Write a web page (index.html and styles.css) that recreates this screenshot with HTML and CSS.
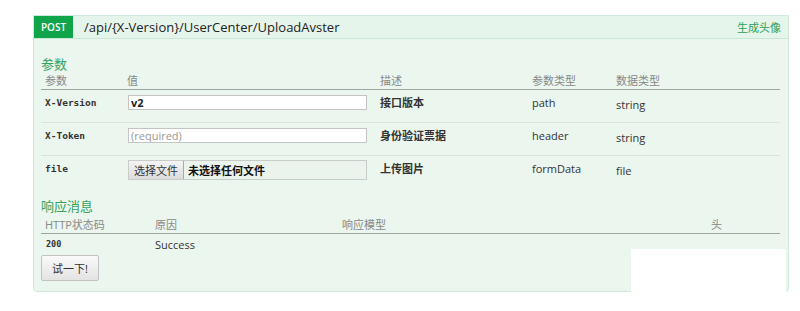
FILE: index.html
```html
<!DOCTYPE html>
<html lang="zh">
<head>
<meta charset="utf-8">
<link rel="stylesheet" href="styles.css">
</head>
<body>
<div class="card">
  <div class="head">
    <span class="method">POST</span>
    <span class="path">/api/{X-Version}/UserCenter/UploadAvster</span>
    <span class="summary">生成头像</span>
  </div>
  <div class="body">
    <h4 class="title">参数</h4>
    <table class="params">
      <colgroup><col class="c1"><col class="c2"><col class="c3"><col class="c4"><col></colgroup>
      <thead>
        <tr><th>参数</th><th>值</th><th>描述</th><th>参数类型</th><th>数据类型</th></tr>
      </thead>
      <tbody>
        <tr>
          <td class="code">X-Version</td>
          <td><input class="txt" type="text" value="v2"></td>
          <td class="desc">接口版本</td>
          <td>path</td>
          <td class="dt">string</td>
        </tr>
        <tr>
          <td class="code">X-Token</td>
          <td><input class="txt" type="text" placeholder="(required)"></td>
          <td class="desc">身份验证票据</td>
          <td>header</td>
          <td class="dt">string</td>
        </tr>
        <tr class="last">
          <td class="code">file</td>
          <td><div class="file"><span class="fbtn">选择文件</span><span class="fname">未选择任何文件</span></div></td>
          <td class="desc">上传图片</td>
          <td>formData</td>
          <td class="dt">file</td>
        </tr>
      </tbody>
    </table>
    <h4 class="title resp">响应消息</h4>
    <table class="codes">
      <colgroup><col class="r1"><col class="r2"><col class="r3"><col></colgroup>
      <thead>
        <tr><th>HTTP状态码</th><th>原因</th><th>响应模型</th><th>头</th></tr>
      </thead>
      <tbody>
        <tr><td class="code">200</td><td>Success</td><td></td><td></td></tr>
      </tbody>
    </table>
    <button class="try">试一下!</button>
  </div>
</div>
<div class="cover"></div>
</body>
</html>
```
FILE: styles.css
```css
* { box-sizing: border-box; }
body {
  margin: 0;
  background: #fff;
  font-family: "Open Sans", "Noto Sans CJK SC", sans-serif;
  color: #333;
  width: 800px;
  height: 311px;
  overflow: hidden;
  position: relative;
}
.card {
  margin: 15px 0 0 33px;
  width: 756px;
  height: 277px;
  border: 1px solid #cfe9da;
  border-radius: 0 0 4px 4px;
  background: #ebf6ef;
}
.head {
  display: flex;
  align-items: center;
  height: 23px;
  background: #e6f5ec;
  border-bottom: 1px solid #c9e7d5;
}
.method {
  display: flex;
  align-items: center;
  justify-content: center;
  width: 39px;
  height: 22px;
  background: #10a54a;
  color: #fff;
  font-size: 10px;
  font-weight: 600;
}
.path {
  margin-left: 11px;
  font-size: 13px;
  color: #222;
  flex: 1;
}
.summary {
  font-size: 11px;
  color: #2f9e55;
  margin-right: 7px;
}
.body {
  padding: 17px 8px 0 7px;
}
.title {
  margin: 0;
  font-size: 13px;
  font-weight: normal;
  color: #36a25b;
  line-height: 17px;
  height: 16px;
}
table {
  width: 739px;
  border-collapse: collapse;
  table-layout: fixed;
  font-size: 11px;
}
th {
  text-align: left;
  font-weight: normal;
  color: #888;
  padding: 0 4px;
  height: 17px;
  line-height: 17px;
  border-bottom: 1px solid #9fa6a2;
}
.c1 { width: 82px; }
.c2 { width: 253px; }
.c3 { width: 152px; }
.c4 { width: 84px; }
.params td {
  vertical-align: top;
  padding: 5px 4px 0;
  height: 33px;
  border-bottom: 1px solid #d8e3dc;
  line-height: 15px;
  color: #333;
}
.params tr.last td { border-bottom: none; height: 34px; }
td.code {
  font-family: "DejaVu Sans Mono", monospace;
  font-weight: bold;
  font-size: 9.5px;
  color: #333;
}
td.desc { font-weight: bold; }
td.dt { padding-top: 7px; }
.txt {
  display: block;
  width: 239px;
  height: 15px;
  margin: 0 0 0 1px;
  padding: 0 2px;
  border: 1px solid #c4c4c4;
  background: #fff;
  font: bold 11px "Open Sans", "Noto Sans CJK SC", sans-serif;
  color: #222;
}
.txt::placeholder { color: #999; font-weight: normal; }
.file {
  display: flex;
  width: 239px;
  height: 20px;
  margin-left: 1px;
  margin-top: -1px;
  border: 1px solid #c8cbc9;
  background: #ebf3ed;
  font-size: 11px;
}
.fbtn {
  display: flex;
  align-items: center;
  padding: 0 5px;
  background: linear-gradient(#f4f4f4, #dcdcdc);
  border-right: 1px solid #aaa;
  color: #333;
}
.fname {
  display: flex;
  align-items: center;
  padding-left: 4px;
  font-weight: bold;
  color: #111;
}
.resp { margin-top: 8px; height: 18px; }
.r1 { width: 110px; }
.r2 { width: 187px; }
.r3 { width: 369px; }
.codes td {
  padding: 3px 4px 0;
  height: 20px;
  vertical-align: top;
  line-height: 15px;
}
.codes td.code { padding-left: 5px; font-size: 8.5px; }
.try {
  display: block;
  margin-top: 2px;
  width: 58px;
  height: 26px;
  padding: 0;
  border: 1px solid #c2c2c2;
  border-radius: 2px;
  background: linear-gradient(#fafafa, #e3e3e3);
  font: 11px "Open Sans", "Noto Sans CJK SC", sans-serif;
  color: #333;
}
.cover {
  position: absolute;
  left: 631px;
  top: 249px;
  width: 155px;
  height: 62px;
  background: #fff;
}
```
